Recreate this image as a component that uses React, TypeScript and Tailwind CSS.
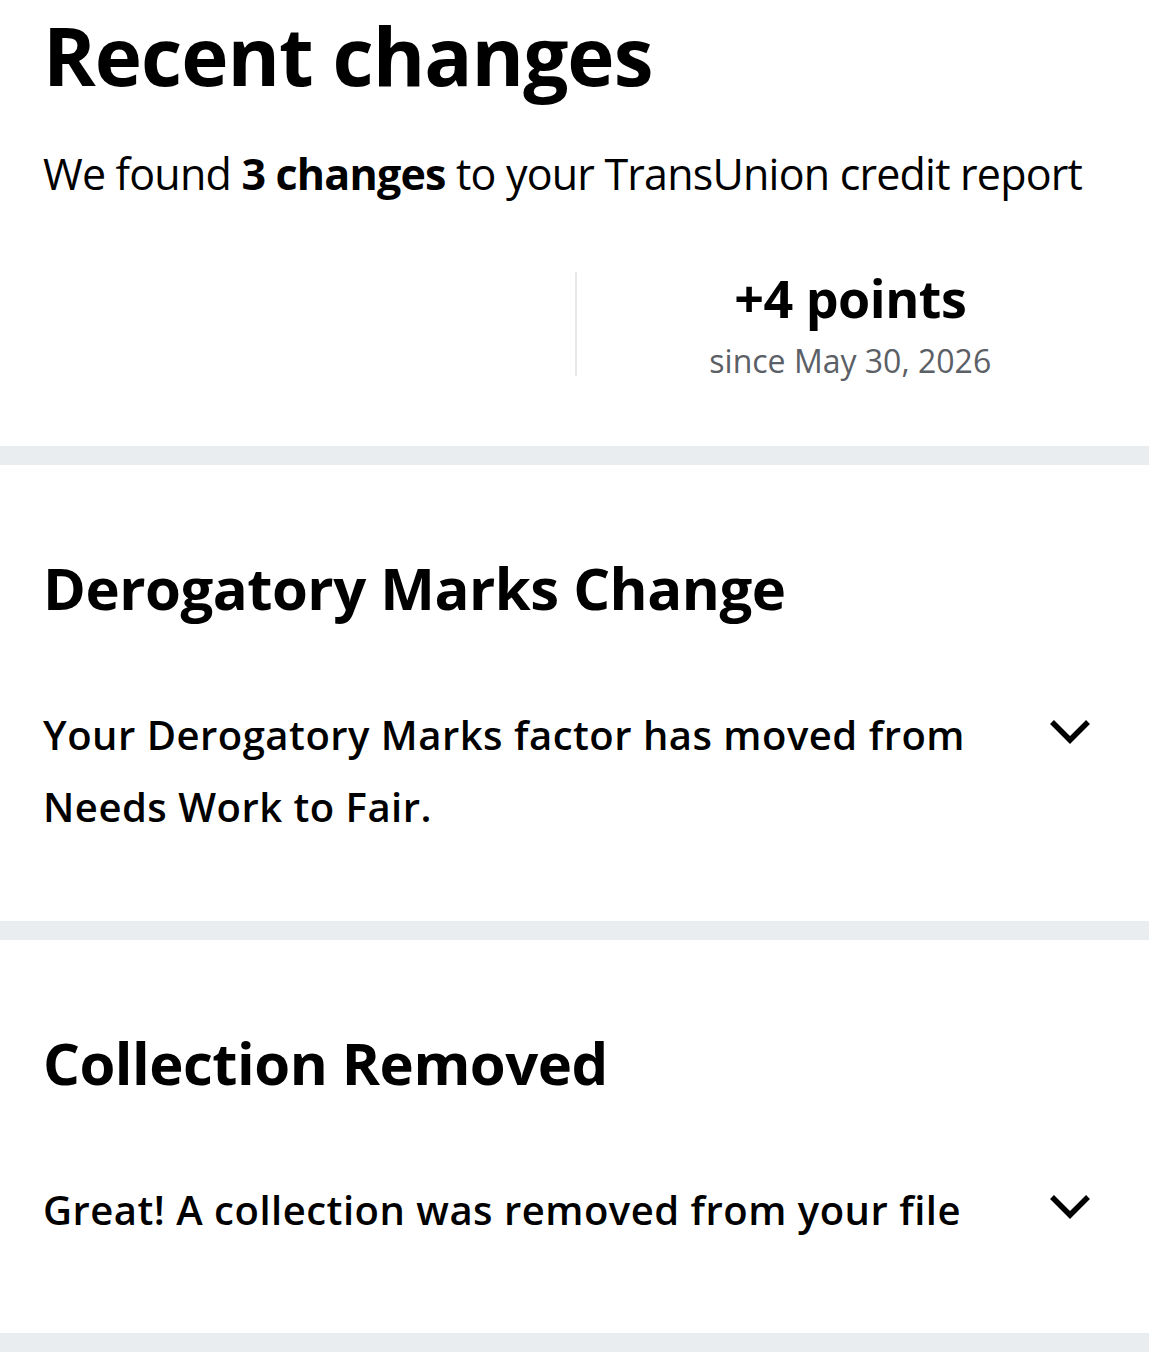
const changes = [
  {
    title: "Derogatory Marks Change",
    body: "Your Derogatory Marks factor has moved from Needs Work to Fair.",
    pad: "pb-[78px]",
  },
  {
    title: "Collection Removed",
    body: "Great! A collection was removed from your file",
    pad: "pb-[87px]",
  },
]

function Divider() {
  return <div className="h-[19px] bg-[#e9edf0]" />
}

function Chevron() {
  return (
    <svg width="44" height="30" viewBox="0 0 44 30" className="mt-[18px] mr-[14px] shrink-0">
      <path d="M4 5 L22 23 L40 5" fill="none" stroke="#000" strokeWidth="5.5" strokeLinecap="butt" strokeLinejoin="miter" />
    </svg>
  )
}

export default function App() {
  return (
    <div className="min-h-[1369px] bg-white text-black" style={{ fontFamily: '"Open Sans", "Noto Sans", sans-serif' }}>
      {/* Header */}
      <section className="px-[43px] pb-[70px]">
        <h1 className="text-[80px] font-bold leading-[110px] tracking-[-1px]">Recent changes</h1>
        <p className="mt-[36px] text-[43px] leading-[56px] tracking-[-0.8px]">
          We found <span className="font-bold">3 changes</span> to your TransUnion credit report
        </p>
        <div className="mt-[70px] grid grid-cols-2">
          <div />
          <div className="flex h-[104px] flex-col items-center border-l-2 border-[#e6e9ec] pl-[18px]">
            <div className="text-[52px] font-bold leading-[52px] tracking-[-0.5px]">+4 points</div>
            <div className="mt-[22px] text-[32px] leading-[30px] text-[#5b6066]">since May 30, 2026</div>
          </div>
        </div>
      </section>

      {changes.map((c) => (
        <div key={c.title}>
          <Divider />
          <section className={`px-[43px] pt-[88px] ${c.pad}`}>
            <h2 className="text-[58px] font-bold leading-[70px] tracking-[-0.5px]">{c.title}</h2>
            <div className="mt-[76px] flex items-start justify-between gap-[60px]">
              <p className="max-w-[950px] text-[40px] font-semibold leading-[72px] tracking-[0.5px]">{c.body}</p>
              <Chevron />
            </div>
          </section>
        </div>
      ))}
      <Divider />
    </div>
  )
}
